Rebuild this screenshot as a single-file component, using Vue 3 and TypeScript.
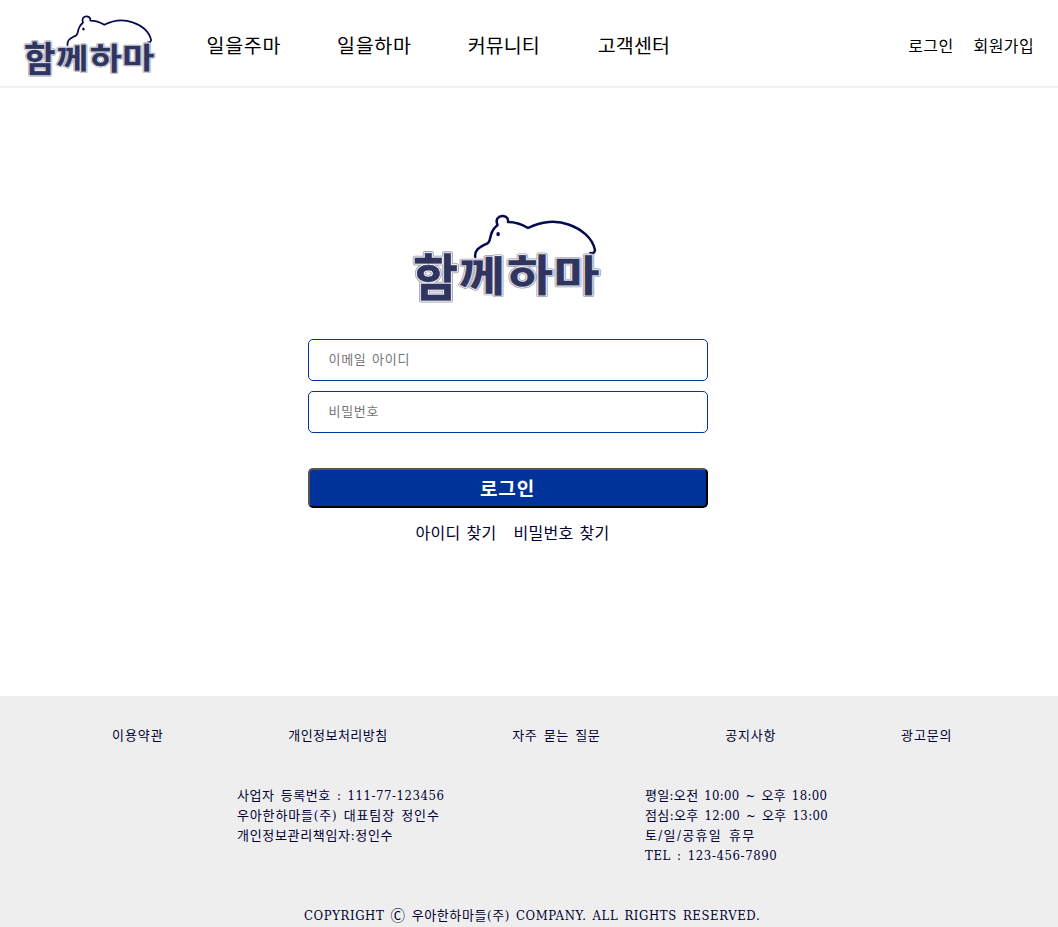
<script setup lang="ts">
import { defineComponent, h } from 'vue'

interface Glyph {
  char: string
  x: number
  y: number
  sx: number
  sy: number
}

interface Line {
  text: string
  spacing: number
}

const glyphs: Glyph[] = [
  { char: '함', x: 12.4, y: 95.6, sx: 1, sy: 1.03 },
  { char: '께', x: 58.6, y: 91.2, sx: 1.02, sy: 0.84 },
  { char: '하', x: 106.6, y: 91.2, sx: 1.02, sy: 0.87 },
  { char: '마', x: 153, y: 91.2, sx: 1.02, sy: 0.85 },
]

const layers = [
  { stroke: '#9a9cae', width: 4.4 },
  { stroke: '#e8e8ee', width: 2.8 },
  { stroke: '#30355f', width: 0.5 },
]

const HippoLogo = defineComponent({
  setup: () => () =>
    h('svg', { viewBox: '12.5 14 189 88', role: 'img', 'aria-label': '함께하마', overflow: 'visible' }, [
      h('g', { fill: 'none', stroke: '#050b4d', 'stroke-width': 2.5, 'stroke-linecap': 'round', 'stroke-linejoin': 'round' }, [
        h('path', {
          d: 'M74.7 57C74 49 80 47 84.5 44.5C91 43 88.5 37 92 31C93.5 28 95 27 97 25C94.5 19 98 15.7 102.5 16C106.5 16.5 108 19 107.5 22C115 22 121 24 127.5 28C141 21 156 20 168 24.5C181 29 192 38 194.5 50C194 53 192 53.5 190 53',
        }),
      ]),
      h('ellipse', { cx: 97.6, cy: 34.1, rx: 1.8, ry: 2.2, fill: '#050b4d' }),
      ...layers.map((l) =>
        h('g', { fill: '#30355f', stroke: l.stroke, 'stroke-width': l.width, 'stroke-linejoin': 'round', 'font-size': 49, 'font-weight': 700, 'font-family': '"Noto Sans CJK KR", sans-serif' },
          glyphs.map((g) => h('text', { transform: `translate(${g.x} ${g.y}) scale(${g.sx} ${g.sy})` }, g.char)),
        ),
      ),
    ]),
})

const menu = ['일을주마', '일을하마', '커뮤니티', '고객센터']
const account = ['로그인', '회원가입']
const policies: Line[] = [
  { text: '이용약관', spacing: 0.95 },
  { text: '개인정보처리방침', spacing: 0.45 },
  { text: '자주 묻는 질문', spacing: 0.68 },
  { text: '공지사항', spacing: 0.85 },
  { text: '광고문의', spacing: 0.9 },
]
const company: Line[] = [
  { text: '사업자 등록번호 : 111-77-123456', spacing: 0.57 },
  { text: '우아한하마들(주) 대표팀장 정인수', spacing: 0.84 },
  { text: '개인정보관리책임자:정인수', spacing: 0.67 },
]
const hours: Line[] = [
  { text: '평일:오전 10:00 ~ 오후 18:00', spacing: 0.33 },
  { text: '점심:오후 12:00 ~ 오후 13:00', spacing: 0.37 },
  { text: '토/일/공휴일 휴무', spacing: 1.35 },
  { text: 'TEL : 123-456-7890', spacing: 0.61 },
]
const spaced = (line: Line) => ({ letterSpacing: `${line.spacing}px` })
</script>

<template>
  <div class="page">
    <header class="header">
      <HippoLogo class="header-logo" />
      <nav class="menu">
        <a v-for="item in menu" :key="item">{{ item }}</a>
      </nav>
      <div class="account">
        <a v-for="item in account" :key="item">{{ item }}</a>
      </div>
    </header>

    <main class="main">
      <HippoLogo class="main-logo" />
      <form class="form" @submit.prevent>
        <input type="text" placeholder="이메일 아이디" />
        <input type="password" placeholder="비밀번호" />
        <button type="submit">로그인</button>
      </form>
      <div class="find">
        <a>아이디 찾기</a>
        <a>비밀번호 찾기</a>
      </div>
    </main>

    <footer class="footer">
      <div class="policies">
        <a v-for="item in policies" :key="item.text" :style="spaced(item)">{{ item.text }}</a>
      </div>
      <div class="info">
        <div class="company">
          <p v-for="line in company" :key="line.text" :style="spaced(line)">{{ line.text }}</p>
        </div>
        <div class="hours">
          <p v-for="line in hours" :key="line.text" :style="spaced(line)">{{ line.text }}</p>
        </div>
      </div>
      <p class="copyright">COPYRIGHT <span class="mark">Ⓒ</span> 우아한하마들(주) COMPANY. ALL RIGHTS RESERVED.</p>
    </footer>
  </div>
</template>

<style>
body {
  margin: 0;
  overflow: hidden;
}
</style>

<style scoped>
.page {
  box-sizing: border-box;
  height: 927px;
  display: flex;
  flex-direction: column;
  overflow: hidden;
  background: #fff;
  color: #000033;
  font-family: 'DejaVu Serif Condensed', 'Noto Sans CJK KR', serif;
}
p {
  margin: 0;
}
.header {
  box-sizing: border-box;
  flex: none;
  height: 88px;
  display: flex;
  align-items: center;
  padding: 7px 24px 0;
  border-bottom: 2px solid #f0f0f0;
  color: #000;
}
.header-logo {
  width: 132px;
  height: 61.5px;
  margin-bottom: 1px;
}
.menu {
  display: flex;
  gap: 56px;
  margin-left: 50.5px;
  font-size: 19.5px;
  letter-spacing: 0.7px;
  line-height: 30px;
}
.menu a:nth-child(3) {
  margin-right: 2px;
  letter-spacing: 0.1px;
}
.menu a:nth-child(4) {
  letter-spacing: 0.1px;
}
.account {
  display: flex;
  gap: 20px;
  margin-left: auto;
  font-size: 16px;
  letter-spacing: 0.4px;
  line-height: 24px;
}
.main {
  flex: none;
  height: 608px;
  display: flex;
  flex-direction: column;
  align-items: center;
}
.main-logo {
  flex: none;
  width: 189px;
  height: 88px;
  margin: 126px 44px 0 0;
}
.form {
  display: flex;
  flex-direction: column;
  gap: 10px;
  width: 400px;
  margin: 37px 42px 0 0;
}
.form input {
  box-sizing: border-box;
  height: 42px;
  padding: 0 20px 2px 19.5px;
  border: 1px solid #003399;
  border-radius: 5px;
  outline: none;
  font-family: inherit;
  font-size: 13px;
  letter-spacing: 0.7px;
  word-spacing: 1.2px;
}
.form input::placeholder {
  color: #757575;
}
.form button {
  box-sizing: border-box;
  height: 40px;
  margin-top: 25px;
  padding: 0 1px 2px 0;
  border: 2px outset #000;
  border-radius: 5px;
  background: #003399;
  color: #fff;
  font-family: inherit;
  font-size: 19px;
  font-weight: 700;
  letter-spacing: 0.8px;
}
.find {
  display: flex;
  gap: 17px;
  margin: 14px 33px 0 0;
  font-size: 16px;
  letter-spacing: 0.3px;
  word-spacing: 1px;
  line-height: 24px;
}
.footer {
  flex: 1;
  background: #eee;
  font-size: 13px;
  letter-spacing: 0.5px;
  word-spacing: 1.8px;
  line-height: 20px;
}
.policies {
  display: flex;
  justify-content: space-between;
  padding: 30px 105.5px 0 112px;
}
.info {
  display: flex;
  height: 80px;
  margin-top: 40px;
  padding-left: 237px;
}
.company {
  width: 408px;
}
.copyright {
  margin-top: 40px;
  padding-left: 304px;
  letter-spacing: 0.6px;
  white-space: nowrap;
}
.mark {
  font-size: 14.5px;
  line-height: 1;
  vertical-align: -1px;
}
</style>
